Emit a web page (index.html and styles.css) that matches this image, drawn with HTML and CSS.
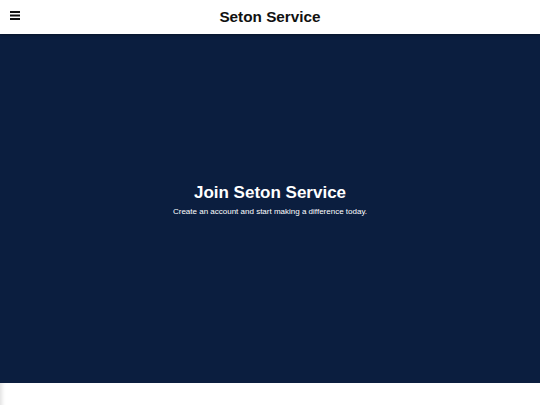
FILE: index.html
```html
<!DOCTYPE html>
<html>
<head>
<meta charset="utf-8">
<link rel="stylesheet" href="styles.css">
</head>
<body>
<header class="topbar">
  <button class="menu" aria-label="Menu">
    <svg width="10" height="9" viewBox="0 0 10 9"><rect x="0" y="0" width="10" height="2" fill="#111"/><rect x="0" y="3.5" width="10" height="2" fill="#111"/><rect x="0" y="7" width="10" height="2" fill="#111"/></svg>
  </button>
  <div class="brand">Seton Service</div>
</header>
<section class="hero">
  <h1 class="hero-title">Join Seton Service</h1>
  <p class="hero-sub">Create an account and start making a difference today.</p>
</section>
<main class="below"></main>
</body>
</html>
```
FILE: styles.css
```css
* { box-sizing: border-box; }
html, body { margin: 0; padding: 0; }
body {
  font-family: "Liberation Sans", Arial, sans-serif;
  background: #fff;
  overflow: hidden;
  height: 405px;
}
.topbar {
  position: relative;
  z-index: 2;
  height: 34px;
  background: #fff;
  display: flex;
  align-items: center;
  justify-content: center;
  box-shadow: 0 1px 3px rgba(0,0,0,0.35);
}
.menu {
  position: absolute;
  left: 10px;
  top: 11px;
  border: 0;
  background: none;
  padding: 0;
  width: 10px;
  height: 9px;
  display: block;
}
.menu svg { display: block; }
.brand {
  font-size: 15.3px;
  font-weight: bold;
  color: #111;
  padding-bottom: 0;
}
.hero {
  height: 349px;
  background: #0b1e3f;
  color: #fff;
  display: flex;
  flex-direction: column;
  align-items: center;
  justify-content: center;
  text-align: center;
  padding-bottom: 18px;
}
.hero-title {
  margin: 0 0 4px 0;
  font-size: 17px;
  font-weight: bold;
  line-height: 20px;
}
.hero-sub {
  margin: 0;
  font-size: 8px;
  line-height: 10px;
}
.below {
  display: block;
  height: 40px;
  box-shadow: inset 5px 0 4px -3px rgba(0,0,0,0.12);
}
```
